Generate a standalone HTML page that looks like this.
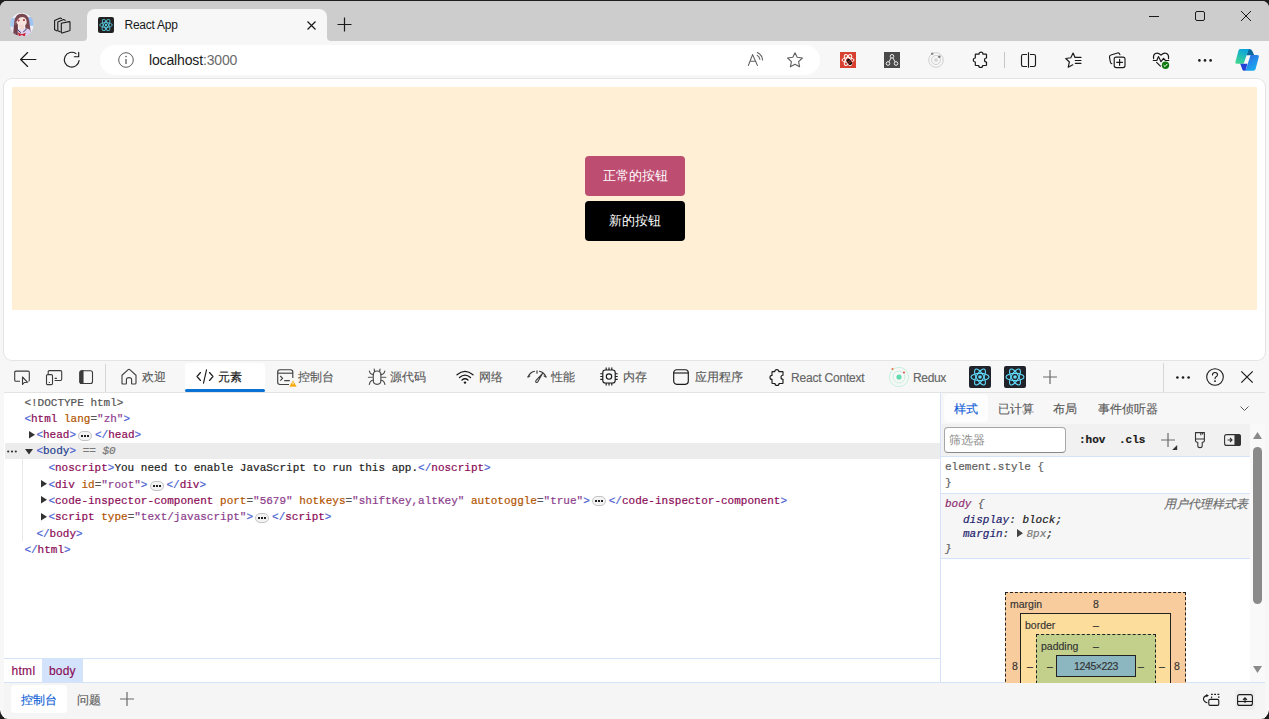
<!DOCTYPE html>
<html lang="zh">
<head>
<meta charset="utf-8">
<style>
*{box-sizing:border-box;margin:0;padding:0}
html,body{width:1269px;height:719px;overflow:hidden;background:#1e1e1e}
body{position:relative;font-family:"Liberation Sans",sans-serif;font-size:12px;color:#1f1f1f}
.a{position:absolute}
svg.i{position:absolute;overflow:visible}
.mono{font-family:"Liberation Mono",monospace;font-size:11px;white-space:pre;position:absolute;line-height:16px;-webkit-text-stroke:0.2px currentColor}
.tb{position:absolute;color:#5a5a5a;font-size:12px;white-space:nowrap;line-height:16px;-webkit-text-stroke:0.15px currentColor}
.br{color:#4c63d2}
.tg{color:#8b0a57}
.an{color:#b25400}
.av{color:#8c3c8c}
.eq{color:#555}
.txt{color:#222}
.ell{display:inline-block;vertical-align:top;width:14px;height:10px;border:1px solid #c4c4c4;border-radius:5px;background:#f3f3f3;position:relative;top:4px;margin:0 2.8px 0 2.2px}
.ell:after{content:"";position:absolute;left:2px;top:3px;width:2px;height:2px;background:#222;box-shadow:3px 0 #222,6px 0 #222}
</style>
</head>
<body>
<!-- window -->
<div class="a" style="left:0;top:1px;width:1269px;height:718px;background:#f7f7f7;border-radius:7px 7px 9px 9px"></div>
<div class="a" style="left:0;top:1px;width:1269px;height:40px;background:#cdcdcd;border-radius:7px 7px 0 0"></div>
<!-- active tab -->
<div class="a" style="left:87px;top:9px;width:240px;height:32px;background:#f7f7f7;border-radius:8px 8px 0 0"></div>
<div class="a" style="left:83px;top:37px;width:4px;height:4px;background:#f7f7f7"></div>
<div class="a" style="left:83px;top:37px;width:4px;height:4px;background:#cdcdcd;border-radius:0 0 4px 0"></div>
<div class="a" style="left:327px;top:37px;width:4px;height:4px;background:#f7f7f7"></div>
<div class="a" style="left:327px;top:37px;width:4px;height:4px;background:#cdcdcd;border-radius:0 0 0 4px"></div>

<!-- avatar -->
<svg class="i" style="left:10.2px;top:13px" width="23.6" height="23.6" viewBox="0 0 24 24">
<defs><clipPath id="av"><circle cx="12" cy="12" r="12"/></clipPath><filter id="blur"><feGaussianBlur stdDeviation="0.45"/></filter></defs>
<g clip-path="url(#av)"><g filter="url(#blur)">
<rect width="24" height="24" fill="#eef0f8"/>
<rect x="0" y="5" width="6" height="10" fill="#a9c8f0"/>
<rect x="18" y="4" width="6" height="9" fill="#9ec2f2"/>
<rect x="0" y="14" width="5" height="10" fill="#e8e4f4"/>
<path d="M3 23 L4.5 8 Q6 0.5 12 0.8 Q18.5 1 19.5 8 L21 19 L16 19 L15 8 L8 8 L8 23Z" fill="#7a4750"/>
<path d="M5.5 14 Q6 3 12 3 Q17 3.5 17 10 Q16 14 12 13.5 Q7 13 6 8Z" fill="#f6e4dc"/>
<path d="M5 9 Q6 1.5 12 1.5 Q18 1.5 18 8 L16.5 6 Q14 3 10 4.5 Q8 6 6.5 9Z" fill="#7a4750"/>
<path d="M9 12 L10 17 L14 17 L14.5 12Z" fill="#f3d8cf"/>
<circle cx="8.7" cy="7.6" r="1.1" fill="#a8404e"/><circle cx="14.2" cy="7.2" r="1.1" fill="#a8404e"/>
<path d="M4 24 L6 17 Q9 15.5 11 17 L12 19 L14 16 Q18 15 20 17 L23 24Z" fill="#dccff0"/>
<path d="M7 16.5 L11 20 M17 16 L13.5 19.5" stroke="#3a3a5a" stroke-width="1"/>
<path d="M8 19.5 L12 21.5 L16 20 L15 24 L12 22.5 L9 24Z" fill="#cc2630"/>
<path d="M4 13 L5.5 22 L8 23 L7.5 12Z" fill="#6e3d46"/>
</g></g>
</svg>
<!-- tab collections icon -->
<svg class="i" style="left:54px;top:17px" width="16" height="16" viewBox="0 0 16 16" fill="none" stroke="#1a1a1a" stroke-width="1.1" stroke-linejoin="round">
<path d="M3.2 14 L0.6 12.8 L0.6 3.5 L6.3 1.1 L8 1.8"/>
<path d="M6.6 15 L3.8 13.8 L3.8 5 L9.5 2.6 L11.6 3.6"/>
<path d="M7.3 6.2 L15.2 4.6 Q16 4.6 16 5.4 L16 13 Q16 13.6 15.4 13.8 L8.2 16 Q7.3 16.1 7.3 15.2 Z"/>
</svg>
<!-- react favicon -->
<div class="a" style="left:98px;top:17px;width:16px;height:16px;background:#222;border-radius:2px"></div>
<svg class="i" style="left:98px;top:17px" width="16" height="16" viewBox="0 0 16 16" fill="none" stroke="#58c4dc" stroke-width="0.9">
<ellipse cx="8" cy="8" rx="6.3" ry="2.4"/>
<ellipse cx="8" cy="8" rx="6.3" ry="2.4" transform="rotate(60 8 8)"/>
<ellipse cx="8" cy="8" rx="6.3" ry="2.4" transform="rotate(120 8 8)"/>
<circle cx="8" cy="8" r="1.2" fill="#58c4dc" stroke="none"/>
</svg>
<div class="a" style="left:124.5px;top:17px;font-size:12px;line-height:16px;color:#1a1a1a;letter-spacing:-0.25px">React App</div>
<svg class="i" style="left:307px;top:21px" width="9" height="9" viewBox="0 0 9 9" stroke="#1a1a1a" stroke-width="1.2"><path d="M0.5 0.5 L8.5 8.5 M8.5 0.5 L0.5 8.5"/></svg>
<svg class="i" style="left:337px;top:17px" width="15" height="15" viewBox="0 0 15 15" stroke="#1a1a1a" stroke-width="1.2"><path d="M7.5 0.5 V14.5 M0.5 7.5 H14.5"/></svg>
<!-- window controls -->
<svg class="i" style="left:1149px;top:16px" width="10" height="1" viewBox="0 0 10 1" stroke="#1a1a1a" stroke-width="1"><path d="M0 0.5 H10"/></svg>
<svg class="i" style="left:1195px;top:11px" width="10" height="10" viewBox="0 0 10 10" fill="none" stroke="#1a1a1a" stroke-width="1"><rect x="0.5" y="0.5" width="9" height="9" rx="1.5"/></svg>
<svg class="i" style="left:1241px;top:11px" width="10" height="10" viewBox="0 0 10 10" stroke="#1a1a1a" stroke-width="1"><path d="M0 0 L10 10 M10 0 L0 10"/></svg>

<!-- toolbar -->
<svg class="i" style="left:20px;top:52px" width="16" height="15" viewBox="0 0 16 15" fill="none" stroke="#1a1a1a" stroke-width="1.15" stroke-linecap="round" stroke-linejoin="round"><path d="M15.9 7.5 H0.6 M7.6 0.5 L0.6 7.5 L7.6 14.5"/></svg>
<svg class="i" style="left:64px;top:52px" width="16" height="16" viewBox="0 0 16 16" fill="none" stroke="#1a1a1a" stroke-width="1.15" stroke-linecap="round" stroke-linejoin="round"><path d="M15.1 8.6 A7.4 7.4 0 1 1 12 1.6"/><path d="M14.7 0.4 V4.7 H10.3"/></svg>
<div class="a" style="left:100px;top:45px;width:720px;height:30px;background:#fff;border-radius:15px"></div>
<svg class="i" style="left:118px;top:52px" width="16" height="16" viewBox="0 0 16 16" fill="none" stroke="#5c5c5c" stroke-width="1"><circle cx="8" cy="8" r="7.3"/><path d="M8 7 V12" stroke-width="1.3"/><circle cx="8" cy="4.6" r="0.8" fill="#5c5c5c" stroke="none"/></svg>
<div class="a" style="left:149px;top:52px;font-size:14px;line-height:16px;color:#1a1a1a;white-space:nowrap;letter-spacing:-0.15px">localhost<span style="color:#6a6a6a">:3000</span></div>
<!-- read aloud -->
<svg class="i" style="left:748px;top:52px" width="16" height="15" viewBox="0 0 16 15" fill="none" stroke="#5f5f5f" stroke-width="1.1" stroke-linecap="round" stroke-linejoin="round"><path d="M0.4 13.4 L4.6 2.6 L9.4 13.4 M2.1 9.3 H7.8"/><path d="M9.3 0.6 Q14.3 3.2 14.6 8 M9.2 3.4 Q11.5 4.8 11.9 7.3"/></svg>
<svg class="i" style="left:787px;top:52px" width="16" height="16" viewBox="0 0 16 16" fill="none" stroke="#5f5f5f" stroke-width="1.1" stroke-linejoin="round"><path d="M8 0.8 L10.2 5.3 L15.4 6 L11.6 9.6 L12.6 14.8 L8 12.3 L3.4 14.8 L4.4 9.6 L0.6 6 L5.8 5.3 Z"/></svg>
<!-- ext icons -->
<div class="a" style="left:840px;top:52px;width:16px;height:16px;background:#d8402f"></div>
<svg class="i" style="left:840px;top:52px" width="16" height="16" viewBox="0 0 16 16" fill="none" stroke="#fff" stroke-width="1"><ellipse cx="8" cy="8" rx="6" ry="2.3"/><ellipse cx="8" cy="8" rx="6" ry="2.3" transform="rotate(60 8 8)"/><ellipse cx="8" cy="8" rx="6" ry="2.3" transform="rotate(120 8 8)"/><g transform="rotate(-35 9.3 10)"><ellipse cx="9.3" cy="10" rx="2.3" ry="3.3" fill="#111" stroke="none"/><path d="M7 9.3 H11.6 M7 11 H11.6" stroke="#d8402f" stroke-width="0.7"/></g></svg>
<div class="a" style="left:884px;top:52px;width:16px;height:16px;background:#4a4a4a"></div>
<svg class="i" style="left:884px;top:52px" width="16" height="16" viewBox="0 0 16 16" fill="none" stroke="#eee" stroke-width="1"><circle cx="8" cy="4.3" r="1.8"/><circle cx="4" cy="11.5" r="1.8"/><circle cx="12" cy="11.5" r="1.8"/><path d="M7.1 5.9 L4.9 9.9 M8.9 5.9 L11.1 9.9"/></svg>
<svg class="i" style="left:928px;top:52px" width="16" height="16" viewBox="0 0 16 16" fill="none" stroke="#cfcfcf" stroke-width="1"><circle cx="8" cy="8" r="7.3"/><circle cx="8" cy="8" r="4.5"/><circle cx="8" cy="8" r="2" fill="#d8d8d8" stroke="none"/><circle cx="4.2" cy="1.7" r="1.3" fill="#8a8a8a" stroke="none"/><circle cx="11.3" cy="4.8" r="1.3" fill="#7a7a7a" stroke="none"/></svg>
<!-- puzzle -->
<svg class="i" style="left:966px;top:48px" width="28" height="24" viewBox="0 0 28 24" fill="none" stroke="#1a1a1a" stroke-width="1.2" stroke-linejoin="round"><path d="M9.8 6.2 H13 A2 2 0 0 1 17 6.2 H20 Q20.5 6.2 20.5 6.7 V10 A2 2 0 0 0 20.5 14 V17 Q20.5 17.5 20 17.5 H16.7 A2 2 0 0 1 12.7 17.5 H9.8 Q9.3 17.5 9.3 17 V14 A2 2 0 0 1 9.3 10 V6.7 Q9.3 6.2 9.8 6.2Z"/></svg>
<div class="a" style="left:1004px;top:52px;width:1px;height:16px;background:#c6c6c6"></div>
<!-- split -->
<svg class="i" style="left:1021px;top:52px" width="16" height="16" viewBox="0 0 16 16" fill="none" stroke="#1a1a1a" stroke-width="1.15"><path d="M6 2.5 H2.2 Q0.5 2.5 0.5 4.2 V12.8 Q0.5 14.5 2.2 14.5 H6 M9 2.5 H12.8 Q14.5 2.5 14.5 4.2 V12.8 Q14.5 14.5 12.8 14.5 H9 M7.5 0.2 V15.8"/></svg>
<!-- favorites -->
<svg class="i" style="left:1065px;top:52px" width="17" height="16" viewBox="0 0 17 16" fill="none" stroke="#1a1a1a" stroke-width="1.15" stroke-linejoin="round" stroke-linecap="round"><path d="M9.9 5.3 L8.1 1 L5.8 5.8 L0.7 6.5 L4.4 10 L3.2 15.2 L7.8 12.8"/><path d="M10.3 5.4 H16 M10.3 8.5 H16 M10.3 11.3 H16"/></svg>
<!-- collections -->
<svg class="i" style="left:1109px;top:52px" width="17" height="16" viewBox="0 0 17 16" fill="none" stroke="#1a1a1a" stroke-width="1.15" stroke-linejoin="round" stroke-linecap="round"><path d="M2.8 11.6 Q1.6 11.4 1.3 10 L0.5 5.2 Q0.3 3.4 1.9 3 L8.6 1 Q10.2 0.6 10.9 2.6"/><rect x="5.2" y="5.1" width="10.8" height="10.5" rx="2"/><path d="M10.6 7.4 V13.3 M7.7 10.35 H13.5"/></svg>
<!-- health -->
<svg class="i" style="left:1153px;top:52px" width="17" height="17" viewBox="0 0 17 17" fill="none" stroke="#1a1a1a" stroke-width="1.15" stroke-linejoin="round" stroke-linecap="round"><path d="M0.6 6.7 Q-0.1 3 2.3 1.6 Q5 0.2 8 3.2 Q11 0.2 13.7 1.6 Q16.1 3 15.5 6.7"/><path d="M0.2 8.5 H3.8 L5.5 4.6 L8 9.7 L10.5 6.3 L12.5 8.5 H15.8"/><path d="M3.6 10.3 L7.4 14.2"/><circle cx="12.5" cy="13.3" r="3.7" fill="#107c10" stroke="none"/><path d="M10.9 13.5 L12 14.5 L14.1 12.2" stroke="#fff" stroke-width="1"/></svg>
<!-- dots -->
<svg class="i" style="left:1198px;top:59px" width="14" height="3" viewBox="0 0 14 3" fill="#1a1a1a"><circle cx="1.4" cy="1.4" r="1.3"/><circle cx="7" cy="1.4" r="1.3"/><circle cx="12.6" cy="1.4" r="1.3"/></svg>
<!-- copilot -->
<svg class="i" style="left:1235px;top:49px" width="24" height="22" viewBox="0 0 24 22">
<defs>
<linearGradient id="cp1" x1="0.6" y1="0" x2="0.2" y2="1"><stop offset="0" stop-color="#0ba3dc"/><stop offset="1" stop-color="#3fd98e"/></linearGradient>
<linearGradient id="cp2" x1="0.2" y1="0" x2="0.8" y2="1"><stop offset="0" stop-color="#2f6be0"/><stop offset="1" stop-color="#17b2f2"/></linearGradient>
</defs>
<path d="M13.5 0 H14.8 Q16.6 0 17.6 2.6 L19.2 6.2 H11.4 Z" fill="#0b689f"/>
<path d="M5 0 H13.8 L8.6 14.7 H1.8 Q0 14.7 0.4 12.9 L3.5 1.6 Q4 0 5 0Z" fill="url(#cp1)"/>
<path d="M5.2 14.7 H12.4 L10.6 21.7 H9.2 Q7.9 21.7 7.3 20.2 Z" fill="#2340d6"/>
<path d="M15.6 6 H22.3 Q24.2 6 23.8 7.9 L20.6 20 Q20.1 21.7 18.4 21.7 H10.5 Z" fill="url(#cp2)"/>
</svg>

<!-- page card -->
<div class="a" style="left:4px;top:79px;width:1261px;height:281px;background:#fff;border-radius:8px;box-shadow:0 0 0 1px #e4e4e4"></div>
<div class="a" style="left:12px;top:87px;width:1245px;height:223px;background:#ffefd5"></div>
<div class="a" style="left:585px;top:156px;width:100px;height:40px;background:#be4d72;border-radius:4px;color:#fff;font-size:13.33px;line-height:40px;text-align:center">正常的按钮</div>
<div class="a" style="left:585px;top:201px;width:100px;height:40px;background:#000;border-radius:4px;color:#fff;font-size:13.33px;line-height:40px;text-align:center">新的按钮</div>

<!-- devtools toolbar -->
<div class="a" style="left:4px;top:392px;width:1261px;height:1px;background:#e3e3e3"></div>
<svg class="i" style="left:14px;top:370px" width="16" height="15" viewBox="0 0 16 15" fill="none" stroke="#3b3b3b" stroke-width="1.1" stroke-linejoin="round"><path d="M6 11.3 H2 Q0.7 11.3 0.7 10 V2.4 Q0.7 1.1 2 1.1 H14 Q15.3 1.1 15.3 2.4 V10 Q15.3 11 14.5 11.2"/><path d="M8.5 7 V14.5 L10.3 12.5 L13.6 12.3 Z"/></svg>
<svg class="i" style="left:46px;top:370px" width="16" height="15" viewBox="0 0 16 15" fill="none" stroke="#3b3b3b" stroke-width="1.1" stroke-linejoin="round"><path d="M2.2 4 V1.8 Q2.2 0.6 3.4 0.6 H14.5 Q15.7 0.6 15.7 1.8 V9.3 Q15.7 10.5 14.5 10.5 H8.6 M8.6 8.4 H10.9"/><rect x="0.5" y="4.6" width="6" height="10" rx="1.2"/><path d="M2.8 12.5 H3.9"/></svg>
<svg class="i" style="left:79px;top:370px" width="14" height="14" viewBox="0 0 14 14" fill="none" stroke="#3b3b3b" stroke-width="1.1"><rect x="0.9" y="0.7" width="12.6" height="12.8" rx="2"/><path d="M2.9 0.7 H4 V13.5 H2.9 Q0.9 13.5 0.9 11.5 V2.7 Q0.9 0.7 2.9 0.7Z" fill="#3b3b3b"/></svg>
<div class="a" style="left:105px;top:364px;width:1px;height:28px;background:#d6d6d6"></div>
<!-- welcome -->
<svg class="i" style="left:121px;top:368px" width="16" height="17" viewBox="0 0 16 17" fill="none" stroke="#424242" stroke-width="1.15" stroke-linejoin="round"><path d="M1 7.2 L7.2 1.6 Q8 1 8.8 1.6 L15 7.2 V15 Q15 16 14 16 H11 Q10.6 16 10.6 15.5 V11.6 Q10.6 9.6 8 9.6 Q5.4 9.6 5.4 11.6 V15.5 Q5.4 16 5 16 H2 Q1 16 1 15 Z"/></svg>
<div class="tb" style="left:142px;top:369px">欢迎</div>
<!-- elements active -->
<div class="a" style="left:185px;top:363px;width:80px;height:29px;background:#fff;border-radius:4px 4px 0 0"></div>
<div class="a" style="left:185px;top:389px;width:80px;height:3px;background:#0a72d2;border-radius:2px"></div>
<svg class="i" style="left:196px;top:369px" width="18" height="15" viewBox="0 0 18 15" fill="none" stroke="#1a1a1a" stroke-width="1.15" stroke-linecap="round" stroke-linejoin="round"><path d="M4.5 3.5 L1 7.5 L4.5 11.5 M13.5 3.5 L17 7.5 L13.5 11.5 M10.5 0.8 L7.5 14.2"/></svg>
<div class="tb" style="left:218px;top:369px;color:#1a1a1a">元素</div>
<!-- console -->
<svg class="i" style="left:277px;top:369px" width="21" height="19" viewBox="0 0 21 19" fill="none" stroke="#424242" stroke-width="1.15" stroke-linejoin="round"><path d="M12 15.5 H3 Q0.7 15.5 0.7 13.2 V3 Q0.7 0.7 3 0.7 H13.5 Q15.8 0.7 15.8 3 V9"/><path d="M0.7 4.2 H15.8"/><path d="M3.3 7 L5.6 9.3 L3.3 11.6 M7.2 11.6 H12.8"/><path d="M16 10.8 L20.2 18 H11.8 Z" fill="#f7a600" stroke="#f7f7f7" stroke-width="0.8"/><path d="M16 13 V15.5" stroke="#fff" stroke-width="0.9"/></svg>
<div class="tb" style="left:298px;top:369px">控制台</div>
<!-- sources -->
<svg class="i" style="left:368px;top:368px" width="18" height="18" viewBox="0 0 18 18" fill="none" stroke="#4a4a4a" stroke-width="1.15" stroke-linecap="round" stroke-linejoin="round"><path d="M5.3 7 Q5.3 3 9.1 3 Q12.9 3 12.9 7 V12.5 Q12.9 16.3 9.1 16.3 Q5.3 16.3 5.3 12.5 Z"/><path d="M6.6 3.6 L6.2 1 M11.6 3.6 L12 1"/><path d="M5.3 6.6 Q2 6.4 1.4 3 M5.3 12.3 Q2 12.4 1.3 16.5 M12.9 6.6 Q16.2 6.4 16.8 3 M12.9 12.3 Q16.2 12.4 16.9 16.5"/><path d="M5.3 9.4 H0.4 M12.9 9.4 H17.8" stroke="#777"/></svg>
<div class="tb" style="left:390px;top:369px">源代码</div>
<!-- network -->
<svg class="i" style="left:456px;top:370px" width="18" height="14" viewBox="0 0 18 14" fill="none" stroke="#1a1a1a" stroke-width="1.3" stroke-linecap="round"><path d="M1 4.8 Q9 -2 17 4.8 M3.5 7.5 Q9 2.8 14.5 7.5 M6 10 Q9 7.5 12 10"/><circle cx="9" cy="12.6" r="1.2" fill="#1a1a1a" stroke="none"/></svg>
<div class="tb" style="left:479px;top:369px">网络</div>
<!-- performance -->
<svg class="i" style="left:527px;top:369px" width="20" height="14" viewBox="0 0 20 14" fill="none" stroke="#3b3b3b" stroke-width="1.15" stroke-linecap="round" stroke-linejoin="round"><path d="M1 7.9 A9.7 9.7 0 0 1 7.5 2.3 M12.5 2.3 A9.7 9.7 0 0 1 19 7.9"/><path d="M1 7.9 L2.8 6.9 M10 1.8 V4.2 M19 7.9 L17.2 6.9"/><path d="M15.6 4.3 L10.8 12.8 Q9.8 14 8.9 13.1 Q8.4 12.3 9.1 11.4 Z"/></svg>
<div class="tb" style="left:551px;top:369px">性能</div>
<!-- memory -->
<svg class="i" style="left:600px;top:367px" width="18" height="19" viewBox="0 0 18 19" fill="none" stroke="#1a1a1a" stroke-width="1.15" stroke-linejoin="round"><rect x="2.8" y="3" width="12.4" height="13" rx="2.5"/><circle cx="9" cy="9.5" r="2.7"/><path d="M6.2 0.5 V3 M9 0.5 V3 M11.8 0.5 V3 M6.2 16 V18.5 M9 16 V18.5 M11.8 16 V18.5 M0.3 6.7 H2.8 M0.3 9.5 H2.8 M0.3 12.3 H2.8 M15.2 6.7 H17.7 M15.2 9.5 H17.7 M15.2 12.3 H17.7"/></svg>
<div class="tb" style="left:623px;top:369px">内存</div>
<!-- application -->
<svg class="i" style="left:673px;top:369px" width="16" height="16" viewBox="0 0 16 16" fill="none" stroke="#1a1a1a" stroke-width="1.15"><rect x="0.7" y="0.7" width="14.6" height="14.6" rx="3"/><path d="M0.7 4 H15.3"/></svg>
<div class="tb" style="left:695px;top:369px">应用程序</div>
<!-- react context -->
<svg class="i" style="left:769px;top:368px" width="16" height="18" viewBox="0 0 16 18" fill="none" stroke="#1a1a1a" stroke-width="1.15" stroke-linejoin="round"><path d="M3.5 3.6 H5.8 A2 2 0 0 1 9.8 3.6 H13.5 Q14 3.6 14 4.1 V7.2 A2 2 0 0 0 14 11.2 V15 Q14 15.5 13.5 15.5 H10 A2 2 0 0 1 6 15.5 H3.5 Q3 15.5 3 15 V11.4 A2 2 0 0 1 3 7.4 V4.1 Q3 3.6 3.5 3.6Z"/></svg>
<div class="tb" style="left:791px;top:370px;letter-spacing:-0.2px;color:#666">React Context</div>
<!-- redux -->
<svg class="i" style="left:889px;top:367px" width="20" height="20" viewBox="0 0 20 20" fill="none" stroke="#b9eed7" stroke-width="0.8"><circle cx="10" cy="10" r="9.6"/><circle cx="10" cy="10" r="6"/><circle cx="10" cy="10" r="2.6" fill="#62dcae" stroke="none"/><circle cx="3.5" cy="2" r="1" fill="#f06a3b" stroke="none"/><circle cx="15" cy="5.5" r="1" fill="#e34a3b" stroke="none"/></svg>
<div class="tb" style="left:913px;top:370px;letter-spacing:-0.35px;color:#666">Redux</div>
<!-- react devtools icons -->
<div class="a" style="left:969px;top:366px;width:22px;height:22px;background:#20232a;border-radius:2px"></div>
<svg class="i" style="left:969px;top:366px" width="22" height="22" viewBox="0 0 22 22" fill="none" stroke="#61dafb" stroke-width="1.1"><ellipse cx="11" cy="11" rx="9" ry="3.6"/><ellipse cx="11" cy="11" rx="9" ry="3.6" transform="rotate(60 11 11)"/><ellipse cx="11" cy="11" rx="9" ry="3.6" transform="rotate(120 11 11)"/><circle cx="11" cy="11" r="1.8" fill="#61dafb" stroke="none"/></svg>
<div class="a" style="left:1004px;top:366px;width:22px;height:22px;background:#20232a;border-radius:2px"></div>
<svg class="i" style="left:1004px;top:366px" width="22" height="22" viewBox="0 0 22 22" fill="none" stroke="#61dafb" stroke-width="1.1"><ellipse cx="11" cy="11" rx="9" ry="3.6"/><ellipse cx="11" cy="11" rx="9" ry="3.6" transform="rotate(60 11 11)"/><ellipse cx="11" cy="11" rx="9" ry="3.6" transform="rotate(120 11 11)"/><circle cx="11" cy="11" r="1.8" fill="#61dafb" stroke="none"/></svg>
<svg class="i" style="left:1043px;top:370px" width="14" height="14" viewBox="0 0 14 14" stroke="#6a6a6a" stroke-width="1.2"><path d="M7 0 V14 M0 7 H14"/></svg>
<div class="a" style="left:1163px;top:363px;width:1px;height:29px;background:#d6d6d6"></div>
<svg class="i" style="left:1176px;top:376px" width="14" height="3" viewBox="0 0 14 3" fill="#1a1a1a"><circle cx="1.4" cy="1.5" r="1.3"/><circle cx="7" cy="1.5" r="1.3"/><circle cx="12.6" cy="1.5" r="1.3"/></svg>
<svg class="i" style="left:1206px;top:368px" width="18" height="18" viewBox="0 0 18 18" fill="none" stroke="#1a1a1a" stroke-width="1.1"><circle cx="9" cy="9" r="8.3"/><path d="M6.5 7 Q6.5 4.5 9 4.5 Q11.5 4.5 11.5 6.8 Q11.5 8.2 9.8 9 Q9 9.5 9 10.8" stroke-linecap="round"/><circle cx="9" cy="13.2" r="0.9" fill="#1a1a1a" stroke="none"/></svg>
<svg class="i" style="left:1241px;top:371px" width="12" height="12" viewBox="0 0 12 12" stroke="#1a1a1a" stroke-width="1.2"><path d="M0.3 0.3 L11.7 11.7 M11.7 0.3 L0.3 11.7"/></svg>

<!-- panel bg -->
<div class="a" style="left:4px;top:393px;width:1261px;height:290px;background:#fff"></div>
<div class="a" style="left:5px;top:443px;width:935px;height:16px;background:#ececec"></div>
<div class="a" style="left:22px;top:459px;width:1px;height:82px;background:#e8e8e8"></div>
<div class="mono" style="left:24.4px;top:395px"><span class="eq">&lt;!DOCTYPE html&gt;</span></div>
<div class="mono" style="left:24.4px;top:411px"><span class="br">&lt;</span><span class="tg">html</span> <span class="an">lang</span><span class="eq">=</span><span class="av">"zh"</span><span class="br">&gt;</span></div>
<svg class="i" style="left:29px;top:430.5px" width="6" height="7.5" viewBox="0 0 6 7.5" fill="#333"><path d="M0 0 L6 3.75 L0 7.5Z"/></svg>
<div class="mono" style="left:36.4px;top:427px"><span class="br">&lt;</span><span class="tg">head</span><span class="br">&gt;</span><span class="ell" style="top:4.1px"></span><span class="br">&lt;/</span><span class="tg">head</span><span class="br">&gt;</span></div>
<svg class="i" style="left:7px;top:450px" width="10" height="3" viewBox="0 0 10 3" fill="#333"><circle cx="1.2" cy="1.5" r="1.1"/><circle cx="5" cy="1.5" r="1.1"/><circle cx="8.8" cy="1.5" r="1.1"/></svg>
<svg class="i" style="left:24.7px;top:448.5px" width="8" height="5.5" viewBox="0 0 8 5.5" fill="#333"><path d="M0 0 L8 0 L4 5.5Z"/></svg>
<div class="mono" style="left:36.4px;top:443px"><span class="br">&lt;</span><span style="color:#1c3d8c">body</span><span class="br">&gt;</span> <span style="color:#7a7a7a;font-style:italic">== $0</span></div>
<div class="mono" style="left:48.4px;top:460px"><span class="br">&lt;</span><span class="tg">noscript</span><span class="br">&gt;</span><span class="txt">You need to enable JavaScript to run this app.</span><span class="br">&lt;/</span><span class="tg">noscript</span><span class="br">&gt;</span></div>
<svg class="i" style="left:41px;top:479.5px" width="6" height="7.5" viewBox="0 0 6 7.5" fill="#333"><path d="M0 0 L6 3.75 L0 7.5Z"/></svg>
<div class="mono" style="left:48.4px;top:477px"><span class="br">&lt;</span><span class="tg">div</span> <span class="an">id</span><span class="eq">=</span><span class="av">"root"</span><span class="br">&gt;</span><span class="ell" style="top:3.5px"></span><span class="br">&lt;/</span><span class="tg">div</span><span class="br">&gt;</span></div>
<svg class="i" style="left:41px;top:496px" width="6" height="7.5" viewBox="0 0 6 7.5" fill="#333"><path d="M0 0 L6 3.75 L0 7.5Z"/></svg>
<div class="mono" style="left:48.4px;top:493px"><span class="br">&lt;</span><span class="tg">code-inspector-component</span> <span class="an">port</span><span class="eq">=</span><span class="av">"5679"</span> <span class="an">hotkeys</span><span class="eq">=</span><span class="av">"shiftKey,altKey"</span> <span class="an">autotoggle</span><span class="eq">=</span><span class="av">"true"</span><span class="br">&gt;</span><span class="ell" style="top:3px"></span><span class="br">&lt;/</span><span class="tg">code-inspector-component</span><span class="br">&gt;</span></div>
<svg class="i" style="left:41px;top:512.5px" width="6" height="7.5" viewBox="0 0 6 7.5" fill="#333"><path d="M0 0 L6 3.75 L0 7.5Z"/></svg>
<div class="mono" style="left:48.4px;top:509px"><span class="br">&lt;</span><span class="tg">script</span> <span class="an">type</span><span class="eq">=</span><span class="av">"text/javascript"</span><span class="br">&gt;</span><span class="ell" style="top:3.7px"></span><span class="br">&lt;/</span><span class="tg">script</span><span class="br">&gt;</span></div>
<div class="mono" style="left:36.4px;top:526px"><span class="br">&lt;/</span><span class="tg">body</span><span class="br">&gt;</span></div>
<div class="mono" style="left:24.4px;top:542px"><span class="br">&lt;/</span><span class="tg">html</span><span class="br">&gt;</span></div>

<!-- breadcrumb -->
<div class="a" style="left:4px;top:658px;width:937px;height:1px;background:#d4e3f8"></div>
<div class="a" style="left:4px;top:682px;width:1261px;height:1px;background:#d4e3f8"></div>
<div class="a" style="left:42px;top:659px;width:41px;height:23px;background:#d3e3fb"></div>
<div class="tb" style="left:11.5px;top:663px;color:#8b0a57;letter-spacing:0.3px">html</div>
<div class="tb" style="left:49px;top:663px;color:#8b0a57;letter-spacing:0.2px">body</div>

<!-- styles pane -->
<div class="a" style="left:940px;top:393px;width:1px;height:290px;background:#d4e3f8"></div>
<div class="a" style="left:941px;top:393px;width:324px;height:31px;background:#f7f7f7"></div>
<div class="a" style="left:944px;top:394px;width:44px;height:28px;background:#fdfdfd;border-radius:4px"></div>
<div class="tb" style="left:954px;top:401px;color:#1160d6">样式</div>
<div class="tb" style="left:998px;top:401px">已计算</div>
<div class="tb" style="left:1053px;top:401px">布局</div>
<div class="tb" style="left:1098px;top:401px">事件侦听器</div>
<svg class="i" style="left:1240px;top:406px" width="9" height="5" viewBox="0 0 9 5" fill="none" stroke="#5a5a5a" stroke-width="1"><path d="M0.5 0.5 L4.5 4.5 L8.5 0.5"/></svg>
<div class="a" style="left:941px;top:424px;width:309px;height:32px;background:#f1f1f1"></div>
<div class="a" style="left:944px;top:427px;width:122px;height:26px;background:#fff;border:1px solid #a6a6a6;border-bottom-color:#8a8a8a;border-radius:4px"></div>
<div class="tb" style="left:949px;top:432px;color:#8a8a8a;-webkit-text-stroke:0">筛选器</div>
<div class="mono" style="left:1079px;top:432px;font-weight:bold;color:#1a1a1a">:hov</div>
<div class="mono" style="left:1119px;top:432px;font-weight:bold;color:#1a1a1a">.cls</div>
<svg class="i" style="left:1161px;top:433px" width="17" height="15" viewBox="0 0 17 15" stroke="#6a6a6a" stroke-width="1.2"><path d="M7 0 V14 M0 7 H14"/><path d="M16.2 12 V17 H11.2Z" fill="#333" stroke="none"/></svg>
<svg class="i" style="left:1194px;top:432px" width="11" height="16" viewBox="0 0 11 16" fill="none" stroke="#333" stroke-width="1.1" stroke-linejoin="round"><path d="M1.5 0.6 H10.4 V8.5 Q10.4 9.5 9.5 10 L8.2 10.6 V14.3 Q8.2 15.6 6 15.6 Q3.8 15.6 3.8 14.3 V10.6 L2.5 10 Q1.5 9.5 1.5 8.5 Z M1.5 7 H10.4 M6.8 0.6 V3.2 M8.6 0.6 V2.4"/></svg>
<svg class="i" style="left:1224px;top:434px" width="17" height="12" viewBox="0 0 17 12" fill="none" stroke="#333" stroke-width="1.1"><rect x="0.6" y="0.6" width="15.8" height="10.8" rx="2"/><path d="M11 0.6 H14.4 Q16.4 0.6 16.4 2.6 V9.4 Q16.4 11.4 14.4 11.4 H11Z" fill="#333"/><path d="M3.5 6 H8 M6 4 L8 6 L6 8"/></svg>
<div class="a" style="left:941px;top:456px;width:309px;height:1px;background:#d4e3f8"></div>
<div class="mono" style="left:945px;top:459px;color:#5e5e5e">element.style {</div>
<div class="mono" style="left:945px;top:475px;color:#5e5e5e">}</div>
<div class="a" style="left:941px;top:493px;width:309px;height:1px;background:#d4e3f8"></div>
<div class="a" style="left:941px;top:494px;width:309px;height:64px;background:#f6f6f6"></div>
<div class="mono" style="left:945px;top:496px;font-style:italic"><span style="color:#8e2c72">body</span> <span style="color:#5e5e5e">{</span></div>
<div class="tb" style="left:1164px;top:496px;font-style:italic;color:#6a6a6a">用户代理样式表</div>
<div class="mono" style="left:963px;top:512px;font-style:italic"><span style="color:#1e1e6e">display</span><span style="color:#333">: </span><span style="color:#1a1a1a">block</span><span style="color:#333">;</span></div>
<div class="mono" style="left:963px;top:526px;font-style:italic"><span style="color:#1e1e6e">margin</span><span style="color:#333">: </span></div>
<svg class="i" style="left:1017px;top:528.6px" width="6" height="8.3" viewBox="0 0 6 8.3" fill="#444"><path d="M0 0 L6 4.15 L0 8.3Z"/></svg>
<div class="mono" style="left:1026.5px;top:526px;font-style:italic;color:#7a7a7a">8px<span style="color:#333">;</span></div>
<div class="mono" style="left:945px;top:541px;font-style:italic;color:#5e5e5e">}</div>
<div class="a" style="left:941px;top:558px;width:309px;height:1px;background:#d4e3f8"></div>
<!-- scrollbar -->
<div class="a" style="left:1250px;top:424px;width:15px;height:258px;background:#f9f9f9"></div>
<svg class="i" style="left:1253px;top:432px" width="9" height="7" viewBox="0 0 9 7" fill="#8a8a8a"><path d="M4.5 0 L9 7 H0Z"/></svg>
<div class="a" style="left:1253px;top:447px;width:9px;height:157px;background:#8a8a8a;border-radius:5px"></div>
<svg class="i" style="left:1253px;top:666px" width="9" height="7" viewBox="0 0 9 7" fill="#8a8a8a"><path d="M0 0 H9 L4.5 7Z"/></svg>

<!-- box model -->
<div class="a" style="left:1005px;top:592px;width:181px;height:100px;background:#f9cc9d;border:1px dashed #222"></div>
<div class="a" style="left:1020px;top:613px;width:151px;height:80px;background:#fddd9b;border:1px solid #222"></div>
<div class="a" style="left:1036px;top:634px;width:120px;height:60px;background:#c3d08b;border:1px dashed #222"></div>
<div class="a" style="left:1056px;top:655px;width:80px;height:22px;background:#8cb6c0;border:1px solid #222"></div>
<div class="tb" style="left:1010px;top:596px;font-size:10.5px;color:#333">margin</div>
<div class="tb" style="left:1093px;top:596px;font-size:10.5px;color:#333">8</div>
<div class="tb" style="left:1025px;top:617px;font-size:10.5px;color:#333">border</div>
<div class="tb" style="left:1093px;top:617px;font-size:10.5px;color:#333">–</div>
<div class="tb" style="left:1041px;top:638px;font-size:10.5px;color:#333">padding</div>
<div class="tb" style="left:1093px;top:638px;font-size:10.5px;color:#333">–</div>
<div class="tb" style="left:1012px;top:658px;font-size:10.5px;color:#333">8</div>
<div class="tb" style="left:1027px;top:658px;font-size:10.5px;color:#333">–</div>
<div class="tb" style="left:1047px;top:658px;font-size:10.5px;color:#333">–</div>
<div class="tb" style="left:1057px;top:658px;width:78px;text-align:center;font-size:10.5px;letter-spacing:-0.4px;color:#333">1245×223</div>
<div class="tb" style="left:1138px;top:658px;font-size:10.5px;color:#333">–</div>
<div class="tb" style="left:1159px;top:658px;font-size:10.5px;color:#333">–</div>
<div class="tb" style="left:1174px;top:658px;font-size:10.5px;color:#333">8</div>

<!-- drawer -->
<div class="a" style="left:4px;top:683px;width:1261px;height:36px;background:#f5f5f5"></div>
<div class="a" style="left:11px;top:685px;width:56px;height:28px;background:#fff;border-radius:4px"></div>
<div class="tb" style="left:21px;top:692px;color:#1160d6">控制台</div>
<div class="tb" style="left:77px;top:692px">问题</div>
<svg class="i" style="left:120px;top:692px" width="14" height="14" viewBox="0 0 14 14" stroke="#6a6a6a" stroke-width="1.2"><path d="M7 0 V14 M0 7 H14"/></svg>
<svg class="i" style="left:1203px;top:693px" width="17" height="13" viewBox="0 0 17 13" fill="none" stroke="#1a1a1a" stroke-width="1.1"><path d="M4 9.8 Q0.3 8.3 0.5 5.5 Q1 2.8 4 2.6" stroke-linecap="round"/><path d="M3.3 0.9 L5.9 2.6 L3.3 4.3Z" fill="#1a1a1a" stroke="none"/><rect x="5.8" y="6.4" width="10" height="6" rx="1.3"/><path d="M8.6 5.2 V1.4 H15.8 V5.2" stroke-dasharray="1.8 1.4"/></svg>
<div class="a" style="left:1235px;top:690px;width:20px;height:20px;background:#eeeeee;border-radius:3px"></div>
<svg class="i" style="left:1237px;top:694px" width="16" height="12" viewBox="0 0 16 12" fill="none" stroke="#1a1a1a" stroke-width="1.1"><rect x="0.6" y="0.6" width="14.8" height="10.8" rx="2"/><path d="M0.6 7.5 H15.4"/><path d="M8 9 V4 M6 5.8 L8 3.8 L10 5.8"/></svg>



<svg class="i" style="left:0;top:711px" width="8" height="8" viewBox="0 0 8 8"><path d="M0 0 V8 H8 A8 8 0 0 1 0 0Z" fill="#1e1e1e"/></svg>
<svg class="i" style="left:1261px;top:711px" width="8" height="8" viewBox="0 0 8 8"><path d="M8 0 V8 H0 A8 8 0 0 0 8 0Z" fill="#1e1e1e"/></svg>
</body>
</html>
